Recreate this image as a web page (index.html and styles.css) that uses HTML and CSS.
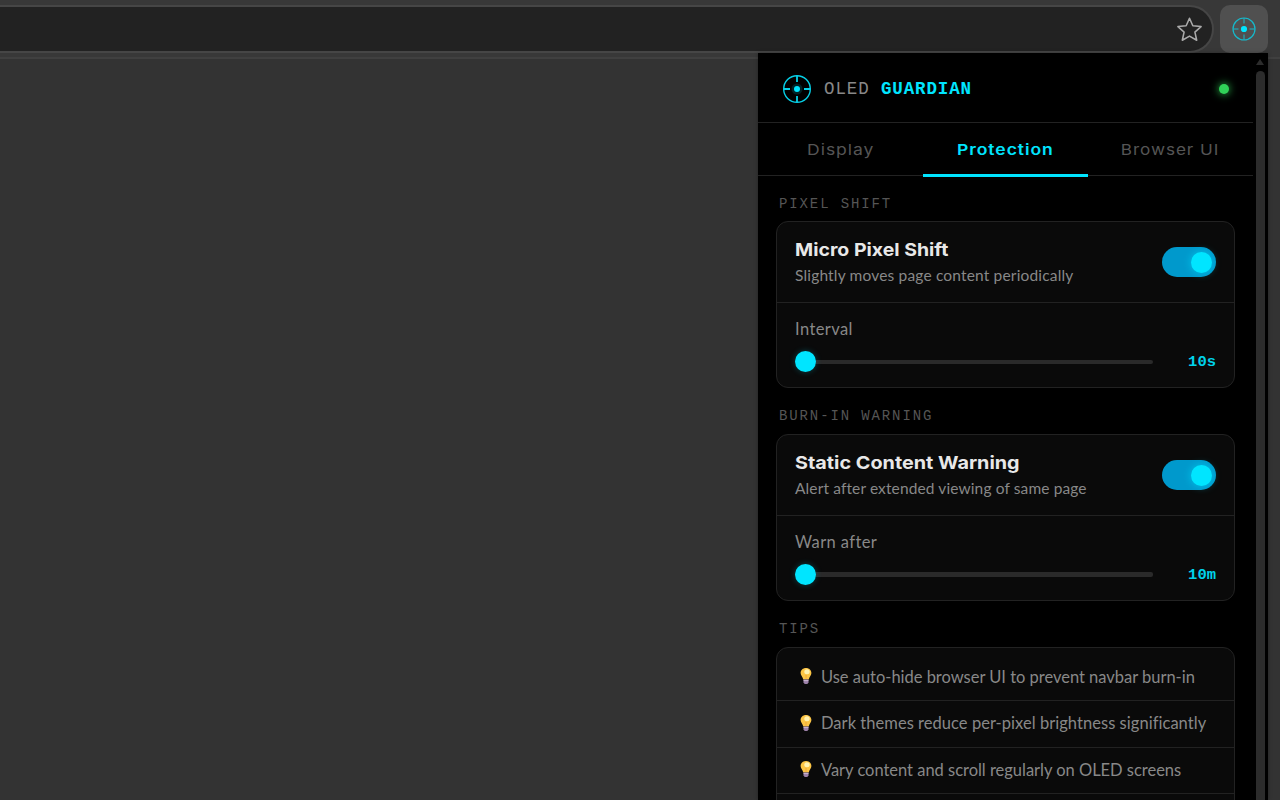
FILE: index.html
```html
<!DOCTYPE html>
<html lang="en">
<head>
  <meta charset="UTF-8" />
  <meta name="viewport" content="width=device-width, initial-scale=1.0"/>
  <title>OLED Guardian</title>
  <link rel="stylesheet" href="styles.css">
</head>
<body>

  <!-- shared icons -->
  <svg class="defs" width="0" height="0">
    <symbol id="target" viewBox="0 0 28 28">
      <circle cx="14" cy="14" r="13.3" fill="none" stroke="currentColor" stroke-width="1.4"/>
      <path d="M14 .8v6.2M14 21v6.2M.8 14H7M21 14h6.2" stroke="currentColor" stroke-width="1.8"/>
      <circle cx="14" cy="14" r="5.5" fill="#00e5ff" opacity=".15"/>
      <circle cx="14" cy="14" r="3" fill="#00e5ff"/>
    </symbol>
    <symbol id="target-small" viewBox="0 0 24 24">
      <circle cx="12" cy="12" r="11" fill="none" stroke="currentColor" stroke-width="1.2"/>
      <path d="M12 1v5.5M12 17.5V23M1 12h5.5M17.5 12H23" stroke="currentColor" stroke-width="1"/>
      <circle cx="12" cy="12" r="3.1" fill="#00e5ff"/>
    </symbol>
    <symbol id="bulb" viewBox="0 0 12 16">
      <path d="M6 0C2.8 0 .6 2.2 .6 5.1c0 2.3 1.9 3.5 2.7 6.4h5.4c.8-2.9 2.7-4.1 2.7-6.4C11.4 2.2 9.2 0 6 0z" fill="#fcc545"/>
      <ellipse cx="7" cy="3.8" rx="2.7" ry="2.5" fill="#fff2b0"/>
      <path d="M5.3 7l.4 4h.7l.4-4z" fill="#f4ad3c"/>
      <path d="M3.5 11.5h5v3L7.3 16H4.7l-1.2-1.5z" fill="#9b80a8"/>
      <path d="M3.5 12.6h5" stroke="#d5c4dd" stroke-width=".8"/>
    </symbol>
  </svg>

  <div class="toolbar">
    <div class="url-bar">
      <svg class="star" viewBox="0 0 24 24">
        <path d="M12 1.2l3.2 7.2 7.9.8-5.9 5.3 1.7 7.8L12 18.3l-6.9 4 1.7-7.8L.9 9.2l7.9-.8z" fill="none" stroke="#aaa" stroke-width="1.5" stroke-linejoin="round"/>
      </svg>
    </div>
    <div class="ext-btn"><svg class="ext-icon"><use href="#target-small"/></svg></div>
  </div>

  <div class="popup">
    <div class="content">
      <header class="header">
        <svg class="logo"><use href="#target"/></svg>
        <div class="brand">OLED <b>GUARDIAN</b></div>
        <span class="status"></span>
      </header>

      <nav class="tabs">
        <div class="tab"><span>Display</span></div>
        <div class="tab active"><span>Protection</span></div>
        <div class="tab tab-browser"><span>Browser UI</span></div>
      </nav>

      <main class="panel">
        <div class="label label-first">PIXEL SHIFT</div>
        <section class="card">
          <div class="row">
            <div>
              <div class="title title-shift">Micro Pixel Shift</div>
              <div class="desc desc-shift">Slightly moves page content periodically</div>
            </div>
            <div class="toggle"></div>
          </div>
          <div class="slider-row">
            <div class="slider-label">Interval</div>
            <div class="slider">
              <div class="track"><div class="thumb"></div></div>
              <div class="value">10s</div>
            </div>
          </div>
        </section>

        <div class="label">BURN-IN WARNING</div>
        <section class="card">
          <div class="row">
            <div>
              <div class="title title-static">Static Content Warning</div>
              <div class="desc">Alert after extended viewing of same page</div>
            </div>
            <div class="toggle"></div>
          </div>
          <div class="slider-row">
            <div class="slider-label">Warn after</div>
            <div class="slider">
              <div class="track track-warn"><div class="thumb"></div></div>
              <div class="value">10m</div>
            </div>
          </div>
        </section>

        <div class="label">TIPS</div>
        <section class="card tips">
          <div class="tip"><svg class="bulb"><use href="#bulb"/></svg><span>Use auto-hide browser UI to prevent navbar burn-in</span></div>
          <div class="tip tip-dark"><svg class="bulb"><use href="#bulb"/></svg><span>Dark themes reduce per-pixel brightness significantly</span></div>
          <div class="tip tip-vary"><svg class="bulb"><use href="#bulb"/></svg><span>Vary content and scroll regularly on OLED screens</span></div>
          <div class="tip"></div>
        </section>
      </main>
    </div>
    <div class="scrollbar">
      <div class="arrow"></div>
      <div class="bar"></div>
    </div>
  </div>

</body>
</html>
```
FILE: styles.css
```css
* {
  box-sizing: border-box;
}
body {
  margin: 0;
  height: 800px;
  overflow: hidden;
  background: #333;
  font-family: Lato, sans-serif;
  color: #888;
}
.defs {
  position: absolute;
}
.toolbar {
  display: flex;
  gap: 6px;
  height: 59px;
  padding-top: 5px;
  background: #383838;
  border-bottom: 2px solid #404040;
}
.url-bar {
  display: flex;
  align-items: center;
  justify-content: flex-end;
  width: 1214px;
  height: 48px;
  padding-right: 10px;
  background: #222;
  border: 2px solid #464646;
  border-left: none;
  border-radius: 0 24px 24px 0;
}
.star {
  width: 25px;
  height: 25px;
}
.ext-btn {
  display: flex;
  align-items: center;
  justify-content: center;
  width: 48px;
  height: 48px;
  background: #505050;
  border-radius: 10px;
}
.ext-icon {
  width: 24px;
  height: 24px;
  color: #16b9cb;
}
.popup {
  position: absolute;
  top: 53px;
  left: 758px;
  display: flex;
  width: 510px;
  height: 747px;
  overflow: hidden;
  background: #000;
  box-shadow: 0 0 4px rgba(0, 0, 0, 0.3);
}
.content {
  width: 495px;
}
.header {
  display: flex;
  align-items: center;
  height: 70px;
  padding: 2px 24px 0 25px;
  border-bottom: 1px solid #222;
}
.logo {
  width: 28px;
  height: 28px;
  margin-right: 13px;
  color: #06cfe6;
}
.brand {
  font-family: "Liberation Mono", monospace;
  font-size: 17.5px;
  line-height: 24px;
  letter-spacing: 0.88px;
  white-space: nowrap;
  color: #888;
}
.brand b {
  color: #00e5ff;
}
.status {
  width: 10px;
  height: 10px;
  margin-left: auto;
  border-radius: 50%;
  background: #30d158;
  box-shadow: 0 0 9px #30d158;
}
.tabs {
  display: flex;
  height: 53px;
  border-bottom: 1px solid #222;
}
.tab {
  width: 165px;
  height: 54px;
  text-align: center;
  font-family: Inter, sans-serif;
  font-size: 15px;
  line-height: 53px;
  letter-spacing: 0.8px;
  color: #555;
  white-space: nowrap;
}
/* stretched to get the wide letterforms */
.tab span {
  display: inline-block;
  transform: scaleX(1.17);
}
.tab-browser {
  padding-right: 2px;
}
.tab-browser span {
  transform: scaleX(1.145);
}
.tab.active {
  font-weight: 600;
  color: #00e5ff;
  border-bottom: 3px solid #00e5ff;
}
.panel {
  padding: 18px;
}
.label {
  height: 18px;
  margin: 0 0 9px 3px;
  font-family: "Liberation Mono", monospace;
  font-size: 14px;
  line-height: 19px;
  letter-spacing: 1.88px;
  color: #555;
}
.label-first {
  line-height: 21px;
}
.card {
  width: 459px;
  height: 167px;
  margin-bottom: 19px;
  background: #0a0a0a;
  border: 1px solid #222;
  border-radius: 12px;
}
.row {
  display: flex;
  align-items: center;
  justify-content: space-between;
  height: 81px;
  padding: 0 18px;
  border-bottom: 1px solid #222;
}
.title {
  height: 26px;
  font-family: Inter, sans-serif;
  font-size: 18px;
  font-weight: 700;
  line-height: 27px;
  color: #e8e8e8;
  white-space: nowrap;
  transform-origin: left;
}
.title-shift {
  transform: scaleX(1.082);
}
.title-static {
  transform: scaleX(1.1);
}
.desc {
  font-size: 15.5px;
  line-height: 26px;
  letter-spacing: 0.12px;
  white-space: nowrap;
}
.desc-shift {
  letter-spacing: 0.17px;
}
.toggle {
  display: flex;
  align-items: center;
  justify-content: flex-end;
  width: 54px;
  height: 30px;
  padding-right: 4px;
  border-radius: 15px;
  background: #0099cc;
}
.toggle::after {
  content: "";
  width: 21px;
  height: 21px;
  border-radius: 50%;
  background: #00e5ff;
  box-shadow: 0 0 9px rgba(0, 229, 255, 0.6);
}
.slider-row {
  padding: 14px 18px 0;
}
.slider-label {
  font-size: 16.5px;
  line-height: 25px;
  letter-spacing: 0.4px;
}
.slider {
  display: flex;
  align-items: center;
  justify-content: space-between;
  height: 40px;
}
.track {
  display: flex;
  align-items: center;
  width: 358px;
  height: 4px;
  border-radius: 2px;
  background: #2a2a2a;
}
.track-warn {
  height: 5px;
  margin-bottom: 1px;
}
.thumb {
  width: 21px;
  height: 21px;
  margin-bottom: 1px;
  border-radius: 50%;
  background: #00e5ff;
  box-shadow: 0 0 6px rgba(0, 229, 255, 0.25);
}
.track-warn .thumb {
  margin-bottom: 0;
}
.value {
  font-family: "Liberation Mono", monospace;
  font-size: 15.5px;
  font-weight: bold;
  color: #00d3eb;
}
.tips {
  height: 220px;
  padding-top: 6px;
}
.tip {
  display: flex;
  align-items: center;
  height: 47px;
  padding: 0 0 1px 23px;
  border-bottom: 1px solid #222;
  font-size: 16.5px;
  letter-spacing: -0.02px;
  white-space: nowrap;
}
.tip-dark {
  padding-bottom: 2px;
  letter-spacing: 0.04px;
}
.tip-vary {
  height: 46px;
  padding-bottom: 2px;
}
.bulb {
  width: 12px;
  height: 16px;
  margin: 0 9px 1px 0;
}
.scrollbar {
  width: 9px;
  margin-left: 3px;
}
.arrow {
  width: 0;
  margin: 6px 0 6px;
  border: 4px solid transparent;
  border-top: none;
  border-bottom: 6px solid #2c2c2c;
}
.bar {
  height: 760px;
  border-radius: 5px;
  background: #2c2c2c;
}
```
